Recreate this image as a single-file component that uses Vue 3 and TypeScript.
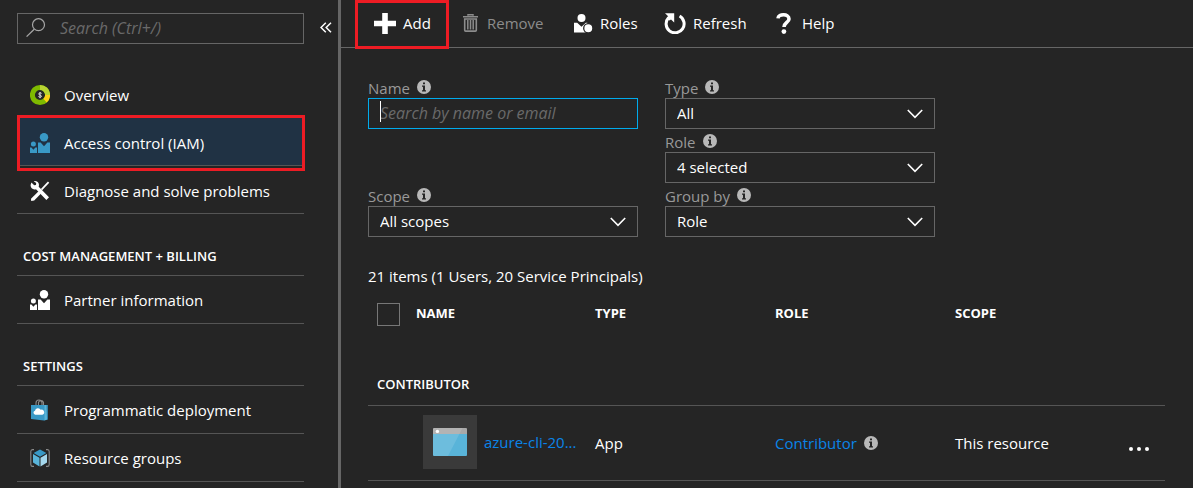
<script setup lang="ts">
import { ref } from 'vue'

interface NavItem {
  label: string
  icon: 'overview' | 'people' | 'tools' | 'bag' | 'cube'
  active?: boolean
}
interface NavGroup {
  title: string
  items: NavItem[]
}
interface Filter {
  id: string
  label: string
  area: string
  options: string[]
}

const groups: NavGroup[] = [
  {
    title: '',
    items: [
      { label: 'Overview', icon: 'overview' },
      { label: 'Access control (IAM)', icon: 'people', active: true },
      { label: 'Diagnose and solve problems', icon: 'tools' },
    ],
  },
  { title: 'COST MANAGEMENT + BILLING', items: [{ label: 'Partner information', icon: 'people' }] },
  {
    title: 'SETTINGS',
    items: [
      { label: 'Programmatic deployment', icon: 'bag' },
      { label: 'Resource groups', icon: 'cube' },
    ],
  },
]

const filters: Filter[] = [
  { id: 'type', label: 'Type', area: 'f-type', options: ['All'] },
  { id: 'role', label: 'Role', area: 'f-role', options: ['4 selected'] },
  { id: 'scope', label: 'Scope', area: 'f-scope', options: ['All scopes'] },
  { id: 'group', label: 'Group by', area: 'f-group', options: ['Role'] },
]

const menuSearch = ref('')
const nameSearch = ref('')
const allChecked = ref(false)
</script>

<template>
  <div class="page">
    <aside class="sidebar">
      <div class="search-row">
        <div class="search">
          <svg class="search-icon" viewBox="0 0 20 20" width="20" height="20" aria-hidden="true">
            <circle cx="12.5" cy="6.7" r="6" fill="none" stroke="#a6a6a6" stroke-width="1.2" />
            <path d="M8.2 11.2 0.6 18.6" stroke="#a6a6a6" stroke-width="1.3" />
          </svg>
          <input v-model="menuSearch" type="text" aria-label="Search menu" placeholder="Search (Ctrl+/)" />
        </div>
        <button class="collapse" type="button" aria-label="Collapse menu">
          <svg viewBox="0 0 12 12" width="12" height="12" aria-hidden="true">
            <path d="M5.8 0.8 1 5.5 5.8 10.2M11 0.8 6.2 5.5 11 10.2" fill="none" stroke="#fff" stroke-width="1.5" />
          </svg>
        </button>
      </div>

      <nav>
        <section v-for="g in groups" :key="g.title">
          <h2 v-if="g.title" class="group-title">{{ g.title }}</h2>
          <a v-for="item in g.items" :key="item.label" href="#" class="nav-item" :class="{ active: item.active }">
            <svg v-if="item.icon === 'overview'" viewBox="0 0 20 22" width="20" height="22" aria-hidden="true">
              <circle cx="10" cy="11" r="7.6" fill="none" stroke="#7fba00" stroke-width="5" />
              <path d="M10 3.4A7.6 7.6 0 0 1 17.6 11" fill="none" stroke="#b8d432" stroke-width="5" />
              <path d="M17.6 11A7.6 7.6 0 0 1 15 16.7" fill="none" stroke="#fcd116" stroke-width="5" />
              <path d="M11.6 9.4C11 8.6 8.7 8.7 8.7 10S11.5 11 11.5 12.3 9 13.3 8.4 12.5M10 8v6.2" fill="none" stroke="#ddd" stroke-width="1" />
            </svg>
            <svg v-else-if="item.icon === 'people'" viewBox="0 0 20 20" width="20" height="20" aria-hidden="true">
              <g :class="item.active ? 'fill-blue' : 'fill-white'">
                <circle cx="14" cy="4.2" r="4.2" />
                <circle cx="3.4" cy="11" r="2.5" />
                <path d="M8 9.6h2.6L14 13.2l3.4-3.6H20V20H8z" />
                <path d="M0 14.6h1.4l2 2.2 2-2.2H7V20H0z" />
              </g>
            </svg>
            <svg v-else-if="item.icon === 'tools'" viewBox="0 0 20 20" width="20" height="20" aria-hidden="true">
              <path d="M1.4 1.4 4.2 4.3 6 3.9 6.2 2 3.8.2C6.2-.4 9 1 9 4l-.3 1.7L19 16.2 16.4 19 6 8.2C3 9.3.4 7 .6 4z" fill="#fff" />
              <path d="M18.6 1.2 11.5 8.6" stroke="#fff" stroke-width="1.8" />
              <path d="M8.6 10.2 11 12.6 4.2 19.6 1.2 20 1 17.8z" fill="#fff" />
            </svg>
            <svg v-else-if="item.icon === 'bag'" viewBox="0 0 20 22" width="20" height="22" aria-hidden="true">
              <path d="M6 7V4a3 3 0 0 1 6 0v3M8.5 7V3.5a2.6 2.6 0 0 1 5 0V7" fill="none" stroke="#8a8a8a" stroke-width="1.1" />
              <path d="M1 6h16.5v14.5L14 21.5 1 20z" fill="#3999c6" />
              <path d="M14.5 6h3.5v14l-3.5 1.5z" fill="#59b4d9" />
              <path d="M16.5 6H18v14l-1 .5z" fill="#2f80a8" />
              <path d="M5.3 15.8a2.1 2.1 0 0 1-.3-4.1 3.1 3.1 0 0 1 5.7-1 2.6 2.6 0 0 1 1.6 5.1z" fill="#fff" />
            </svg>
            <svg v-else viewBox="0 0 20 20" width="20" height="20" aria-hidden="true">
              <path d="M4 1.6H2.5Q.8 1.6.8 3.6v12.8q0 2 1.7 2H4M16 1.6h1.5q1.7 0 1.7 2v12.8q0 2-1.7 2H16" fill="none" stroke="#8a8a8a" stroke-width="1.1" />
              <path d="M10 1.4 16.4 5 10 8.8 3.6 5z" fill="#3999c6" />
              <path d="M3 6 9.5 9.8v8.6L3 14.6z" fill="#59b4d9" />
              <path d="M17 6 10.5 9.8v8.6L17 14.6z" fill="#a5d7ec" />
            </svg>
            <span>{{ item.label }}</span>
          </a>
        </section>
      </nav>
    </aside>

    <main class="main">
      <div class="toolbar">
        <button class="tool add" type="button">
          <svg viewBox="0 0 22 21" width="22" height="21" aria-hidden="true">
            <path d="M8.2 0h5.6v7.8H22v5.4h-8.2V21H8.2v-7.8H0V7.8h8.2z" fill="#fff" />
          </svg>
          <span>Add</span>
        </button>
        <button class="tool remove" type="button" disabled>
          <svg viewBox="0 0 15 18" width="15" height="18" aria-hidden="true">
            <path d="M5 1.8V.7h5v1.1M0 2.8h15" fill="none" stroke="#8c8c8c" stroke-width="1.5" />
            <path d="M1.7 5v11.2q0 .9.9.9h9.8q.9 0 .9-.9V5z" fill="none" stroke="#8c8c8c" stroke-width="1.6" />
            <path d="M4.8 6v9.5M7.5 6v9.5M10.2 6v9.5" stroke="#8c8c8c" stroke-width="1.5" />
          </svg>
          <span>Remove</span>
        </button>
        <button class="tool roles" type="button">
          <svg viewBox="0 0 19 19" width="19" height="19" aria-hidden="true">
            <circle cx="7.5" cy="4" r="4" fill="#fff" />
            <path d="M0 8.8h3.2l4.3 4 4.3-4h1.6v9.7H0z" fill="#fff" />
            <circle cx="14.3" cy="14.3" r="4.6" fill="#fff" stroke="#252525" stroke-width="1.3" />
          </svg>
          <span>Roles</span>
        </button>
        <button class="tool refresh" type="button">
          <svg viewBox="0 0 22 21" width="22" height="21" aria-hidden="true">
            <path d="M15.6 3A9 9 0 1 1 4.6 4.6" fill="none" stroke="#fff" stroke-width="3" />
            <path d="M1 .2h9.2v9.2L7 6.4 5.4 7.6 2.8 5l1.4-1.8z" fill="#fff" />
          </svg>
          <span>Refresh</span>
        </button>
        <button class="tool help" type="button">
          <svg viewBox="0 0 16 21" width="16" height="21" aria-hidden="true">
            <path d="M2 5.4C2.4.6 13 .4 13 6c0 3.4-5 3.6-5 8" fill="none" stroke="#fff" stroke-width="3.6" />
            <circle cx="7.9" cy="18.6" r="2.4" fill="#fff" />
          </svg>
          <span>Help</span>
        </button>
      </div>

      <div class="content">
        <form class="filters" @submit.prevent>
          <div class="field f-name">
            <div class="label-row">
              <label for="name">Name</label>
              <svg class="info" viewBox="0 0 14 14" width="14" height="14" aria-hidden="true">
                <circle cx="7" cy="7" r="7" fill="#b8b8b8" />
                <path d="M6 2.4h2v1.9H6zM5 5.6h3v4.7h1v1.2H5v-1.2h1V6.8H5z" fill="#252525" />
              </svg>
            </div>
            <div class="control focused">
              <input id="name" v-model="nameSearch" type="text" placeholder="Search by name or email" />
              <span class="caret"></span>
            </div>
          </div>
          <div v-for="f in filters" :key="f.id" class="field" :class="f.area">
            <div class="label-row">
              <label :for="f.id">{{ f.label }}</label>
              <svg class="info" viewBox="0 0 14 14" width="14" height="14" aria-hidden="true">
                <circle cx="7" cy="7" r="7" fill="#b8b8b8" />
                <path d="M6 2.4h2v1.9H6zM5 5.6h3v4.7h1v1.2H5v-1.2h1V6.8H5z" fill="#252525" />
              </svg>
            </div>
            <div class="control">
              <select :id="f.id">
                <option v-for="o in f.options" :key="o">{{ o }}</option>
              </select>
              <svg class="chevron" viewBox="0 0 16 10" width="16" height="10" aria-hidden="true">
                <path d="M.8 1 8 8.4 15.2 1" fill="none" stroke="#fff" stroke-width="1.6" />
              </svg>
            </div>
          </div>
        </form>

        <p class="count">21 items (1 Users, 20 Service Principals)</p>

        <table>
          <colgroup>
            <col class="c-check" />
            <col class="c-name" />
            <col class="c-data" />
            <col class="c-data" />
            <col />
            <col class="c-more" />
          </colgroup>
          <thead>
            <tr>
              <th class="check"><input v-model="allChecked" type="checkbox" aria-label="Select all" /></th>
              <th scope="col">NAME</th>
              <th scope="col">TYPE</th>
              <th scope="col">ROLE</th>
              <th scope="col">SCOPE</th>
              <th></th>
            </tr>
          </thead>
          <tbody>
            <tr class="group">
              <th colspan="6" scope="rowgroup">CONTRIBUTOR</th>
            </tr>
            <tr class="entry">
              <td></td>
              <td>
                <div class="who">
                  <span class="tile">
                    <svg viewBox="0 0 34 28" width="34" height="28" aria-hidden="true">
                      <path d="M0 1q0-1 1-1h32q1 0 1 1v5H0z" fill="#a9a9a9" />
                      <path d="M0 6h34v21q0 1-1 1H1q-1 0-1-1z" fill="#59b4d9" />
                      <path d="M1 0h28.5L15 28H1q-1 0-1-1V1q0-1 1-1z" fill="#fff" fill-opacity=".12" />
                      <circle cx="4.4" cy="3.4" r="1.7" fill="#fff" />
                    </svg>
                  </span>
                  <a href="#">azure-cli-20...</a>
                </div>
              </td>
              <td>App</td>
              <td>
                <div class="role">
                  <a href="#">Contributor</a>
                  <svg class="info" viewBox="0 0 14 14" width="14" height="14" aria-hidden="true">
                    <circle cx="7" cy="7" r="7" fill="#b8b8b8" />
                    <path d="M6 2.4h2v1.9H6zM5 5.6h3v4.7h1v1.2H5v-1.2h1V6.8H5z" fill="#252525" />
                  </svg>
                </div>
              </td>
              <td>This resource</td>
              <td>
                <button class="more" type="button" aria-label="More actions">
                  <svg viewBox="0 0 20 4" width="20" height="4" aria-hidden="true">
                    <g fill="#fff">
                      <circle cx="2" cy="2" r="2" />
                      <circle cx="10" cy="2" r="2" />
                      <circle cx="18" cy="2" r="2" />
                    </g>
                  </svg>
                </button>
              </td>
            </tr>
          </tbody>
        </table>
      </div>
    </main>
  </div>
</template>

<style>
body {
  margin: 0;
  background: #252525;
}
</style>

<style scoped>
* {
  box-sizing: border-box;
}
.page {
  display: flex;
  height: 100vh;
  overflow: hidden;
  background: #252525;
  color: #fff;
  font-family: 'Open Sans', 'Noto Sans', sans-serif;
  font-size: 15px;
  line-height: 20px;
}
a {
  text-decoration: none;
}
button {
  padding: 0;
  border: 0;
  background: none;
  color: inherit;
  font: inherit;
}
input,
select {
  font: inherit;
  color: #fff;
  outline: none;
}

.sidebar {
  flex: none;
  width: 341px;
  border-right: 3px solid #666;
  padding: 13px 0 0 17px;
}
.search-row {
  display: flex;
  align-items: center;
  margin-bottom: 26px;
}
.search {
  display: flex;
  align-items: center;
  gap: 14px;
  width: 287px;
  height: 31px;
  padding: 0 0 2px 8px;
  border: 1px solid #666;
}
.search-icon {
  flex: none;
}
.search input {
  flex: 1;
  min-width: 0;
  padding: 0;
  border: 0;
  background: none;
}
input::placeholder {
  color: #6a6a6a;
  font-size: 16px;
  font-style: italic;
  opacity: 1;
}
.collapse {
  display: flex;
  margin-left: 16px;
  padding-bottom: 2px;
}
nav {
  width: 287px;
}
.group-title {
  margin: 0;
  height: 62px;
  padding: 32px 6px 0;
  border-bottom: 1px solid #555;
  font-size: 13px;
  font-weight: 600;
}
.nav-item {
  display: flex;
  align-items: center;
  gap: 14px;
  height: 48px;
  padding: 2px 13px 0;
  border-bottom: 1px solid #555;
  color: #fff;
}
.group-title ~ .nav-item {
  padding-top: 0;
}
.nav-item svg {
  flex: none;
}
.nav-item.active {
  position: relative;
  background: #203244;
}
.nav-item.active::after {
  content: '';
  position: absolute;
  inset: -3px -1px -6px 0;
  border: 3px solid #ed1c24;
}
.fill-blue {
  fill: #3999c6;
}
.fill-white {
  fill: #fff;
}

.main {
  flex: 1;
  min-width: 0;
}
.toolbar {
  display: flex;
  height: 48px;
  padding-left: 14px;
  border-bottom: 1px solid #666;
}
.tool {
  display: flex;
  align-items: center;
  gap: 7px;
  height: 46px;
}
.add {
  width: 94px;
  height: 49px;
  padding: 0 0 3px 16px;
  border: 3px solid #ed1c24;
}
.remove {
  gap: 9px;
  width: 111px;
  padding-left: 14px;
  color: #8c8c8c;
}
.roles {
  width: 90px;
  padding-left: 14px;
}
.refresh {
  width: 112px;
  padding-left: 14px;
}
.help {
  gap: 10px;
  padding-left: 14px;
}

.content {
  padding: 27px 28px 0 27px;
}
.filters {
  display: grid;
  grid-template-columns: 270px 270px;
  grid-template-areas: 'name type' '. role' 'scope group';
  column-gap: 27px;
}
.f-name {
  grid-area: name;
}
.f-type {
  grid-area: type;
}
.f-role {
  grid-area: role;
}
.f-scope {
  grid-area: scope;
}
.f-group {
  grid-area: group;
}
.label-row {
  display: flex;
  align-items: center;
  gap: 7px;
  height: 23px;
  color: #999;
}
.label-row label {
  padding-top: 2px;
}
.control {
  position: relative;
  height: 31px;
  border: 1px solid #666;
}
.control.focused {
  border-color: #00abec;
}
.control input,
.control select {
  display: block;
  width: 100%;
  height: 100%;
  padding: 0 11px 2px;
  border: 0;
  border-radius: 0;
  background: none;
  appearance: none;
}
.chevron {
  position: absolute;
  right: 11px;
  top: 10px;
  pointer-events: none;
}
.caret {
  position: absolute;
  left: 11px;
  top: 2px;
  width: 1px;
  height: 21px;
  background: #fff;
}

.count {
  margin: 29px 0 17px;
}
table {
  width: 100%;
  table-layout: fixed;
  border-collapse: collapse;
  text-align: left;
}
.c-check {
  width: 48px;
}
.c-name {
  width: 179px;
}
.c-data {
  width: 180px;
}
.c-more {
  width: 36px;
}
th,
td {
  padding: 0;
}
thead th {
  height: 60px;
  vertical-align: top;
  font-size: 13px;
  font-weight: 700;
}
thead .check {
  padding-left: 9px;
}
.check input {
  display: block;
  width: 23px;
  height: 23px;
  margin: 0;
  border: 1px solid #777;
  background: none;
  appearance: none;
}
.group th {
  height: 42px;
  padding: 0 9px;
  border-bottom: 1px solid #555;
  font-size: 13px;
  font-weight: 600;
}
.entry td {
  height: 75px;
  border-bottom: 1px solid #555;
}
.who,
.role {
  display: flex;
  align-items: center;
  gap: 7px;
}
.who {
  height: 74px;
  padding-bottom: 2px;
}
.tile {
  display: flex;
  align-items: center;
  justify-content: center;
  width: 54px;
  height: 54px;
  margin-left: 7px;
  background: #3a3a3a;
}
.who a,
.role a {
  color: #0a84e8;
}
.more {
  display: flex;
  padding-top: 12px;
}
</style>
